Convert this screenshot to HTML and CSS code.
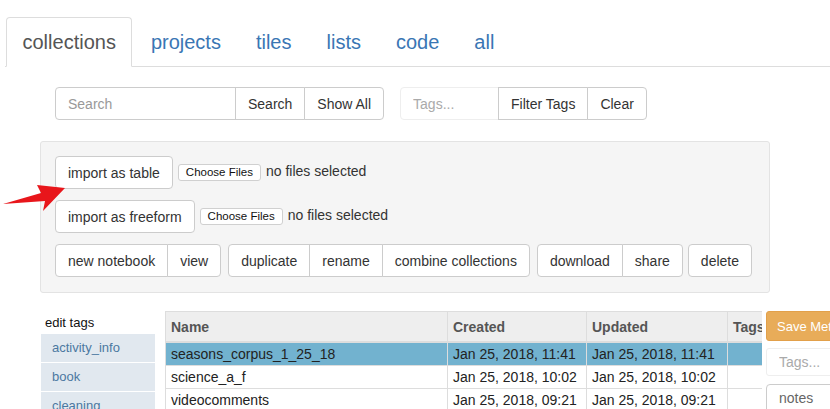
FILE: index.html
```html
<!DOCTYPE html>
<html>
<head>
<meta charset="utf-8">
<link rel="stylesheet" href="styles.css">
</head>
<body>
<ul class="tabs">
  <li class="tab active">collections</li>
  <li class="tab">projects</li>
  <li class="tab">tiles</li>
  <li class="tab">lists</li>
  <li class="tab">code</li>
  <li class="tab">all</li>
</ul>

<div class="search-row">
  <div class="group">
    <input class="input search-input" placeholder="Search">
    <button class="btn">Search</button>
    <button class="btn">Show All</button>
  </div>
  <div class="group">
    <input class="input tags-input" placeholder="Tags...">
    <button class="btn">Filter Tags</button>
    <button class="btn">Clear</button>
  </div>
</div>

<div class="well">
  <div class="import-row">
    <button class="btn single">import as table</button>
    <span class="file-btn">Choose Files</span>
    <span class="file-text">no files selected</span>
  </div>
  <div class="import-row">
    <button class="btn single">import as freeform</button>
    <span class="file-btn">Choose Files</span>
    <span class="file-text">no files selected</span>
  </div>
  <div class="action-row">
    <div class="group"><button class="btn">new notebook</button><button class="btn">view</button></div>
    <div class="group"><button class="btn">duplicate</button><button class="btn">rename</button><button class="btn">combine collections</button></div>
    <div class="group"><button class="btn">download</button><button class="btn">share</button></div>
    <div class="group"><button class="btn">delete</button></div>
  </div>
  <svg class="arrow" width="70" height="40" viewBox="0 0 70 40">
    <polygon points="2,24 40,13 36,5 64,8 42,31 44,21" fill="#e8161b"/>
  </svg>
</div>

<div class="lower">
  <div class="sidebar">
    <div class="side-title">edit tags</div>
    <div class="tag-item">activity_info</div>
    <div class="tag-item">book</div>
    <div class="tag-item">cleaning</div>
  </div>
  <div class="table-wrap">
    <table class="grid">
      <colgroup><col class="c-name"><col class="c-date"><col class="c-date2"><col class="c-tags"></colgroup>
      <thead><tr><th>Name</th><th>Created</th><th>Updated</th><th>Tags</th></tr></thead>
      <tbody>
        <tr class="selected"><td>seasons_corpus_1_25_18</td><td>Jan 25, 2018, 11:41</td><td>Jan 25, 2018, 11:41</td><td></td></tr>
        <tr><td>science_a_f</td><td>Jan 25, 2018, 10:02</td><td>Jan 25, 2018, 10:02</td><td></td></tr>
        <tr><td>videocomments</td><td>Jan 25, 2018, 09:21</td><td>Jan 25, 2018, 09:21</td><td></td></tr>
      </tbody>
    </table>
  </div>
  <div class="meta">
    <button class="btn-warning">Save Metadata</button>
    <input class="meta-tags" placeholder="Tags...">
    <div class="notes">notes</div>
  </div>
</div>
</body>
</html>
```

FILE: styles.css
```css
* { box-sizing: border-box; }
body {
  margin: 0;
  font-family: "Liberation Sans", Arial, sans-serif;
  font-size: 14px;
  color: #333;
  background: #fff;
  overflow: hidden;
  width: 830px;
  height: 409px;
}
.tabs {
  list-style: none;
  margin: 0 0 0 5px;
  padding: 17px 0 0 1px;
  display: flex;
  border-bottom: 1px solid #ddd;
  height: 67px;
}
.tab {
  font-size: 20px;
  line-height: 28px;
  padding: 10px 15.5px;
  margin-right: 2px;
  margin-bottom: -1px;
  border: 1px solid transparent;
  border-radius: 4px 4px 0 0;
  color: #3a76b4;
}
.tab.active {
  color: #555;
  border-color: #ddd;
  border-bottom-color: #fff;
  background: #fff;
}
.search-row {
  display: flex;
  gap: 16px;
  margin: 20px 0 0 55px;
}
.group { display: flex; }
.btn {
  font-family: inherit;
  font-size: 14px;
  line-height: 20px;
  height: 33px;
  padding: 6px 12px;
  color: #333;
  background: #fff;
  border: 1px solid #ccc;
  margin-left: -1px;
  border-radius: 0;
  white-space: nowrap;
}
.group .btn:first-child { margin-left: 0; border-radius: 4px 0 0 4px; }
.group .btn:last-child { border-radius: 0 4px 4px 0; }
.group .btn:only-child { border-radius: 4px; }
.btn.single { border-radius: 4px; margin-left: 0; }
.input {
  font-family: inherit;
  font-size: 14px;
  height: 33px;
  padding: 6px 12px;
  border: 1px solid #ccc;
  color: #555;
  outline: none;
}
.input::placeholder { color: #999; }
.search-input { width: 181px; border-radius: 4px 0 0 4px; }
.tags-input { width: 99px; border-color: #eee; border-radius: 4px 0 0 4px; margin-right: -1px; }
.tags-input::placeholder { color: #aaa; }
.group .tags-input + .btn { margin-left: 0; border-radius: 0; }
.well {
  position: relative;
  margin: 21px 0 0 40px;
  width: 730px;
  height: 152px;
  background: #f5f5f5;
  border: 1px solid #e3e3e3;
  border-radius: 3px;
  padding: 14px;
}
.import-row {
  display: flex;
  align-items: center;
  margin-bottom: 11px;
}
.file-btn {
  margin-left: 5px;
  height: 17px;
  font-size: 11.5px;
  line-height: 15px;
  padding: 0 7px;
  background: #fff;
  border: 1px solid #d0d0d0;
  border-radius: 3px;
  color: #111;
}
.file-text {
  margin-left: 5px;
  color: #333;
  font-size: 14px;
  margin-top: -4px;
}
.action-row {
  display: flex;
  gap: 7px;
}
.action-row .group:last-child { margin-left: -2px; }
.arrow {
  position: absolute;
  left: -40px;
  top: 38px;
}
.lower {
  display: flex;
  margin: 17px 0 0 41px;
  align-items: flex-start;
}
.sidebar { width: 114px; flex: none; }
.side-title {
  font-size: 13px;
  color: #111;
  height: 24px;
  padding: 6px 0 0 4px;
  line-height: 14px;
}
.tag-item {
  background: #e1e8ef;
  color: #4c78a1;
  font-size: 13px;
  height: 28px;
  line-height: 28px;
  padding-left: 11px;
  margin-bottom: 1px;
}
.table-wrap {
  margin-left: 10px;
  margin-top: 1px;
  width: 597px;
  overflow: hidden;
  flex: none;
}
.grid {
  border-collapse: collapse;
  table-layout: fixed;
  width: 660px;
}
.c-name { width: 282px; }
.c-date { width: 139px; }
.c-date2 { width: 141px; }
.c-tags { width: 98px; }
.grid th {
  background: #eee;
  color: #555;
  font-weight: bold;
  text-align: left;
  padding: 5px 5px 4px;
  line-height: 20px;
  border: 1px solid #ddd;
  border-bottom-width: 2px;
}
.grid td {
  padding: 1px 5px 1px;
  line-height: 20px;
  border: 1px solid #ddd;
  color: #222;
  white-space: nowrap;
  overflow: hidden;
}
.grid tr.selected td { background: #72b2cf; }
.meta {
  margin-left: 4px;
  margin-top: 1px;
  width: 100px;
  flex: none;
  display: flex;
  flex-direction: column;
}
.btn-warning {
  font-family: inherit;
  font-size: 13px;
  height: 30px;
  padding: 5px 10px;
  background: #e8ac59;
  border: 1px solid #e2a04a;
  border-radius: 3px;
  color: #fff;
  text-align: left;
  white-space: nowrap;
  overflow: hidden;
  width: 100px;
}
.meta-tags {
  margin-top: 7px;
  height: 28px;
  font-family: inherit;
  font-size: 14px;
  padding: 4px 12px;
  border: 1px solid #eee;
  border-radius: 3px 0 0 3px;
  outline: none;
}
.meta-tags::placeholder { color: #aaa; }
.notes {
  margin-top: 8px;
  height: 40px;
  border: 1px solid #ccc;
  border-radius: 4px;
  padding: 5px 12px;
  color: #666;
  font-size: 14px;
}
```
